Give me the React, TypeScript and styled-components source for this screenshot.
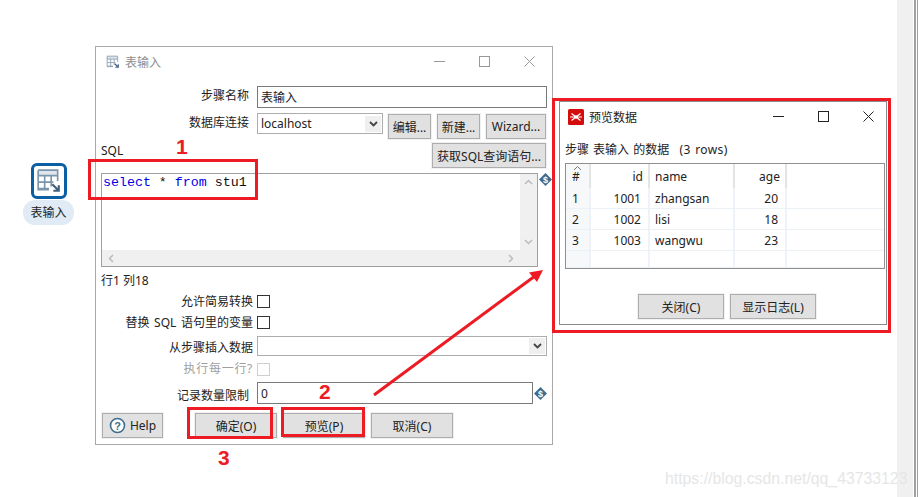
import { createGlobalStyle, styled } from 'styled-components';

const uiFont = `"Noto Sans", "Noto Sans CJK SC", sans-serif`;

const GlobalStyle = createGlobalStyle`
  html, body { margin: 0; padding: 0; background: #fff; }
  body { width: 918px; height: 497px; overflow: hidden; font-family: ${uiFont}; font-size: 12px; color: #222; }
`;

const Canvas = styled.div`
  position: relative;
  width: 918px;
  height: 497px;
  overflow: hidden;
  background: #fff;
`;

const RightEdge = styled.div`
  position: absolute;
  left: 897px;
  top: 0;
  width: 21px;
  height: 497px;
  background: linear-gradient(
    to right,
    #f0f0f0 16px,
    #fff 16px,
    #fff 17px,
    #a0a0a0 17px,
    #a0a0a0 19px,
    #fff 19px,
    #fff 20px,
    #a0a0a0 20px
  );
`;

const StepNode = styled.div`
  position: absolute;
  left: 23px;
  top: 163px;
  width: 51px;
  display: flex;
  flex-direction: column;
  align-items: center;
`;

const StepIcon = styled.div`
  width: 36px;
  height: 36px;
  box-sizing: border-box;
  border: 3px solid #0b5fa5;
  border-radius: 6px;
  display: flex;
  align-items: center;
  justify-content: center;
  background: #fff;
`;

const StepLabel = styled.div`
  margin-top: 1px;
  width: 51px;
  height: 25px;
  line-height: 25px;
  border-radius: 12px;
  background: #e1ebf5;
  text-align: center;
  font-size: 12px;
  color: #222;
`;

const Window = styled.div<{ $x: number; $y: number; $w: number; $h: number; $border: string }>`
  position: absolute;
  left: ${p => p.$x}px;
  top: ${p => p.$y}px;
  width: ${p => p.$w}px;
  height: ${p => p.$h}px;
  box-sizing: border-box;
  background: #fff;
  border: 1px solid ${p => p.$border};
  display: flex;
  flex-direction: column;
`;

const TitleBar = styled.div<{ $muted?: boolean; $pl: number; $pr: number }>`
  height: 29px;
  flex: none;
  display: flex;
  align-items: center;
  padding: 0 ${p => p.$pr}px 0 ${p => p.$pl}px;
  gap: 5px;
  color: ${p => (p.$muted ? '#8d8d8d' : '#222')};
  font-size: 12px;
`;

const TitleText = styled.span`
  flex: 1;
`;

const WinButtons = styled.div`
  display: flex;
  gap: 9px;
`;

const WinButton = styled.div`
  width: 36px;
  display: flex;
  justify-content: center;
  align-items: center;
`;

const Form = styled.div`
  flex: 1;
  display: flex;
  flex-direction: column;
  padding: 10px 5px 0 5px;
`;

const Row = styled.div<{ $h: number; $gap: number; $top?: boolean; $mt?: number }>`
  height: ${p => p.$h}px;
  margin-top: ${p => p.$mt ?? 0}px;
  flex: none;
  display: flex;
  gap: ${p => p.$gap}px;
  align-items: ${p => (p.$top ? 'flex-start' : 'center')};
`;

const Label = styled.div<{ $w: number; $disabled?: boolean; $pt?: number }>`
  width: ${p => p.$w}px;
  flex: none;
  padding-top: ${p => p.$pt ?? 0}px;
  text-align: right;
  font-size: 12px;
  line-height: 18px;
  word-spacing: 1.5px;
  letter-spacing: ${p => (p.$disabled ? 0.7 : 0)}px;
  white-space: nowrap;
  color: ${p => (p.$disabled ? '#a0a0a0' : '#222')};
`;

const TextInput = styled.div<{ $w: number }>`
  width: ${p => p.$w}px;
  height: 22px;
  box-sizing: border-box;
  border: 1px solid #7a7a7a;
  padding-left: 3px;
  line-height: 21px;
  font-size: 12px;
  background: #fff;
`;

const Select = styled.div<{ $w: number; $h: number }>`
  width: ${p => p.$w}px;
  height: ${p => p.$h}px;
  box-sizing: border-box;
  border: 1px solid #adadad;
  padding: 1px 1px 1px 3px;
  display: flex;
  align-items: center;
  justify-content: space-between;
  font-size: 12px;
  color: #222;
`;

const SelectArrow = styled.div`
  width: 16px;
  height: 16px;
  background: #efefef;
  display: flex;
  align-items: center;
  justify-content: center;
`;

const FieldGroup = styled.div`
  display: flex;
  align-items: flex-start;
`;

const Button = styled.div<{ $w: number; $ml?: number; $mt?: number }>`
  width: ${p => p.$w}px;
  height: 25px;
  margin-left: ${p => p.$ml ?? 0}px;
  margin-top: ${p => p.$mt ?? 0}px;
  flex: none;
  box-sizing: border-box;
  background: #e1e1e1;
  border: 1px solid #adadad;
  box-shadow: 0 0 0 1px #f1f1f1;
  display: flex;
  align-items: center;
  justify-content: center;
  gap: 4px;
  font-size: 12px;
  color: #222;
  white-space: nowrap;
`;

const SqlHead = styled.div`
  display: flex;
  justify-content: space-between;
  align-items: flex-start;
  height: 25px;
  flex: none;
  margin-top: 4px;
  padding-right: 1px;
`;

const SqlLabel = styled.div`
  font-size: 12px;
  line-height: 16px;
`;

const SqlRow = styled.div`
  display: flex;
  align-items: flex-start;
  flex: none;
  gap: 1px;
  height: 94px;
  margin-top: 5px;
`;

const SqlBox = styled.div`
  width: 437px;
  height: 94px;
  flex: none;
  box-sizing: border-box;
  border: 1px solid #a0a0a0;
  display: grid;
  grid-template-columns: 1fr 17px;
  grid-template-rows: 1fr 16px;
`;

const SqlText = styled.div`
  font-family: "Liberation Mono", monospace;
  font-size: 13.3px;
  padding: 1px 1px 0;
  line-height: 16px;
  color: #111;
`;

const Keyword = styled.span`
  color: #0000e6;
`;

const ScrollV = styled.div`
  background: #f0f0f0;
  display: flex;
  flex-direction: column;
  justify-content: space-between;
  align-items: center;
  padding: 5px 0;
`;

const ScrollH = styled.div`
  grid-column: 1 / span 2;
  background: #f0f0f0;
  display: flex;
  justify-content: space-between;
  align-items: center;
  padding: 0 23px 0 6px;
`;

const Position = styled.div`
  height: 24px;
  flex: none;
  font-size: 12px;
  line-height: 28px;
`;

const CheckBox = styled.div<{ $disabled?: boolean }>`
  width: 13px;
  height: 13px;
  box-sizing: border-box;
  border: 1px solid ${p => (p.$disabled ? '#cfcfcf' : '#333')};
  background: #fff;
`;

const VarIcon = styled.div<{ $ml?: number }>`
  margin-left: ${p => p.$ml ?? 0}px;
  display: flex;
`;

const InputWithIcon = styled.div`
  display: flex;
  align-items: center;
`;

const Footer = styled.div`
  display: flex;
  align-items: center;
  margin-top: 9px;
  height: 25px;
`;

const PreviewBody = styled.div`
  flex: 1;
  display: flex;
  flex-direction: column;
  padding: 0 0 0 5px;
`;

const RowsCaption = styled.div`
  height: 32px;
  line-height: 38px;
  font-size: 12px;
  word-spacing: 1px;
  flex: none;
`;

const RowsCount = styled.span`
  margin-left: 6px;
  letter-spacing: 0.4px;
`;

const TableFrame = styled.div`
  width: 320px;
  height: 106px;
  box-sizing: border-box;
  border: 1px solid #8f8f8f;
  flex: none;
`;

const Grid = styled.div`
  display: grid;
  grid-template-columns: 25px 59px 85px 52px 1fr;
  grid-template-rows: 24px 21px 21px 21px 1fr;
  height: 100%;
`;

const Cell = styled.div<{ $right?: boolean; $head?: boolean; $index?: boolean; $last?: boolean }>`
  box-sizing: border-box;
  font-size: 12px;
  padding: 0 ${p => (p.$head ? 5 : 7)}px 0 ${p => (p.$index ? 6 : 5)}px;
  display: flex;
  align-items: center;
  position: relative;
  justify-content: ${p => (p.$right ? 'flex-end' : 'flex-start')};
  background: ${p => (p.$index ? '#f7f8f9' : '#fff')};
  border-right: ${p => (p.$last ? 'none' : `2px solid ${p.$head ? '#e4e4e4' : '#eef3fa'}`)};
  border-bottom: ${p => (p.$head ? 'none' : '1px solid #ecf1f6')};
`;

const SortCaret = styled.svg`
  position: absolute;
  left: 7px;
  top: 1px;
`;

const PreviewButtons = styled.div`
  display: flex;
  justify-content: center;
  gap: 6px;
  margin-top: 25px;
  padding-left: 3px;
`;

const RedBox = styled.div<{ $x: number; $y: number; $w: number; $h: number }>`
  position: absolute;
  left: ${p => p.$x}px;
  top: ${p => p.$y}px;
  width: ${p => p.$w}px;
  height: ${p => p.$h}px;
  box-sizing: border-box;
  border: 3px solid #ed1c24;
`;

const Badge = styled.div<{ $x: number; $y: number }>`
  position: absolute;
  left: ${p => p.$x}px;
  top: ${p => p.$y}px;
  color: #ed1c24;
  font-family: "Liberation Sans", sans-serif;
  font-weight: 700;
  font-size: 21px;
  line-height: 24px;
`;

const Arrow = styled.svg`
  position: absolute;
  left: 0;
  top: 0;
`;

const Watermark = styled.div`
  position: absolute;
  left: 665px;
  top: 470px;
  font-family: "Liberation Sans", sans-serif;
  font-size: 15.8px;
  line-height: 18px;
  color: #e6e6e6;
  white-space: nowrap;
`;

const ChevronDown = () => (
  <svg width="11" height="8" viewBox="0 0 11 8">
    <path d="M2 2l3.5 3.5L9 2" fill="none" stroke="#444" strokeWidth="1.8" />
  </svg>
);

const TableIcon = ({ size, color }: { size: number; color: string }) => (
  <svg width={size} height={size} viewBox="0 0 24 24">
    <rect x="2" y="2" width="18" height="5" fill="#dfe5ea" />
    <path d="M2 2h18v10M2 2v18h10" fill="none" stroke={color} strokeWidth="1.5" />
    <path d="M2 7h18M2 13h14M2 19h10M8 7v13M14 7v10" fill="none" stroke={color} strokeWidth="1.5" />
    <path d="M15 15l6 6M21 16v5h-5" fill="none" stroke="#41617f" strokeWidth="2" />
  </svg>
);

const VariableIcon = () => (
  <svg width="13" height="13" viewBox="0 0 13 13">
    <path d="M6.5 0L13 6.5 6.5 13 0 6.5z" fill="#3f6c8c" />
    <text x="6.5" y="9.8" fontSize="9" fontWeight="700" textAnchor="middle" fill="#fff" fontFamily="Liberation Sans">
      $
    </text>
  </svg>
);

const WindowControls = ({ color }: { color: string }) => (
  <WinButtons>
    <WinButton>
      <svg width="11" height="11"><path d="M0 5.500h11" stroke={color} /></svg>
    </WinButton>
    <WinButton>
      <svg width="11" height="11"><rect x=".5" y=".5" width="10" height="10" fill="none" stroke={color} /></svg>
    </WinButton>
    <WinButton>
      <svg width="11" height="11"><path d="M.5.5l10 10M10.500.5l-10 10" stroke={color} /></svg>
    </WinButton>
  </WinButtons>
);

export default function App() {
  return (
    <Canvas>
      <GlobalStyle />
      <RightEdge />

      <StepNode>
        <StepIcon>
          <TableIcon size={26} color="#7b96ac" />
        </StepIcon>
        <StepLabel>表输入</StepLabel>
      </StepNode>

      <Window $x={95} $y={46} $w={458} $h={399} $border="#a9a9a9">
        <TitleBar $muted $pl={10} $pr={5}>
          <TableIcon size={14} color="#8aa0b2" />
          <TitleText>表输入</TitleText>
          <WindowControls color="#999" />
        </TitleBar>
        <Form>
          <Row $h={22} $gap={8} $top>
            <Label $w={148} $pt={1}>步骤名称</Label>
            <TextInput $w={290}>表输入</TextInput>
          </Row>
          <Row $h={26} $gap={8} $top $mt={5}>
            <Label $w={148} $pt={1}>数据库连接</Label>
            <FieldGroup>
              <Select $w={126} $h={21}>
                localhost
                <SelectArrow><ChevronDown /></SelectArrow>
              </Select>
              <Button $w={43} $ml={5} $mt={1}>编辑...</Button>
              <Button $w={43} $ml={6} $mt={1}>新建...</Button>
              <Button $w={60} $ml={6} $mt={1}>Wizard...</Button>
            </FieldGroup>
          </Row>
          <SqlHead>
            <SqlLabel>SQL</SqlLabel>
            <Button $w={114}>获取SQL查询语句...</Button>
          </SqlHead>
          <SqlRow>
            <SqlBox>
              <SqlText>
                <Keyword>select</Keyword> * <Keyword>from</Keyword> stu1
              </SqlText>
              <ScrollV>
                <svg width="9" height="6"><path d="M1 5l3.500-3.500L8 5" fill="none" stroke="#bbb" strokeWidth="1.5" /></svg>
                <svg width="9" height="6"><path d="M1 1l3.500 3.500L8 1" fill="none" stroke="#bbb" strokeWidth="1.5" /></svg>
              </ScrollV>
              <ScrollH>
                <svg width="6" height="9"><path d="M5 1L1.500 4.500 5 8" fill="none" stroke="#bbb" strokeWidth="1.5" /></svg>
                <svg width="6" height="9"><path d="M1 1l3.500 3.500L1 8" fill="none" stroke="#bbb" strokeWidth="1.5" /></svg>
              </ScrollH>
            </SqlBox>
            <VarIcon><VariableIcon /></VarIcon>
          </SqlRow>
          <Position>行1 列18</Position>
          <Row $h={21} $gap={4}>
            <Label $w={152}>允许简易转换</Label>
            <CheckBox />
          </Row>
          <Row $h={21} $gap={4}>
            <Label $w={152}>替换 SQL 语句里的变量</Label>
            <CheckBox />
          </Row>
          <Row $h={26} $gap={4}>
            <Label $w={152} $pt={4}>从步骤插入数据</Label>
            <Select $w={290} $h={20}>
              <span />
              <SelectArrow><ChevronDown /></SelectArrow>
            </Select>
          </Row>
          <Row $h={20} $gap={4}>
            <Label $w={152} $disabled>执行每一行?</Label>
            <CheckBox $disabled />
          </Row>
          <Row $h={22} $gap={8} $mt={3}>
            <Label $w={148} $pt={6}>记录数量限制</Label>
            <InputWithIcon>
              <TextInput $w={276}>0</TextInput>
              <VarIcon $ml={1}><VariableIcon /></VarIcon>
            </InputWithIcon>
          </Row>
          <Footer>
            <Button $w={61} $ml={1}>
              <svg width="17" height="17" viewBox="0 0 17 17">
                <circle cx="8.500" cy="8.500" r="7" fill="#fff" stroke="#3f6c8c" strokeWidth="1.600" />
                <text x="8.500" y="12.500" fontSize="11" fontWeight="700" textAnchor="middle" fill="#3f6c8c" fontFamily="Liberation Sans">?</text>
              </svg>
              Help
            </Button>
            <Button $w={82} $ml={32}>确定(O)</Button>
            <Button $w={82} $ml={6}>预览(P)</Button>
            <Button $w={82} $ml={6}>取消(C)</Button>
          </Footer>
        </Form>
      </Window>

      <Window $x={559} $y={101} $w={328} $h={224} $border="#8a8a8a">
        <TitleBar $pl={8} $pr={0}>
          <svg width="16" height="16" viewBox="0 0 16 16">
            <rect width="16" height="16" rx="1.500" fill="#d40c0c" />
            <path d="M8 8L3.500 4.500M8 8l4.500-3.500M8 8l-4.500 3.500M8 8l4.500 3.500M8 8H2M8 8h6" stroke="#fff" strokeWidth="1.200" />
            <circle cx="8" cy="8" r="1.800" fill="#fff" />
          </svg>
          <TitleText>预览数据</TitleText>
          <WindowControls color="#222" />
        </TitleBar>
        <PreviewBody>
          <RowsCaption>
            步骤 表输入 的数据 <RowsCount>(3 rows)</RowsCount>
          </RowsCaption>
          <TableFrame>
            <Grid>
              <Cell $head $index>
                <SortCaret width="9" height="6"><path d="M1 5l3.500-3.500L8 5" fill="none" stroke="#777" /></SortCaret>
                #
              </Cell>
              <Cell $head $right>id</Cell>
              <Cell $head>name</Cell>
              <Cell $head $right>age</Cell>
              <Cell $head $last />
              <Cell $index>1</Cell>
              <Cell $right>1001</Cell>
              <Cell>zhangsan</Cell>
              <Cell $right>20</Cell>
              <Cell $last />
              <Cell $index>2</Cell>
              <Cell $right>1002</Cell>
              <Cell>lisi</Cell>
              <Cell $right>18</Cell>
              <Cell $last />
              <Cell $index>3</Cell>
              <Cell $right>1003</Cell>
              <Cell>wangwu</Cell>
              <Cell $right>23</Cell>
              <Cell $last />
              <Cell $index />
              <Cell />
              <Cell />
              <Cell />
              <Cell $last />
            </Grid>
          </TableFrame>
          <PreviewButtons>
            <Button $w={86}>关闭(C)</Button>
            <Button $w={86}>显示日志(L)</Button>
          </PreviewButtons>
        </PreviewBody>
      </Window>

      <RedBox $x={88} $y={159} $w={170} $h={41} />
      <RedBox $x={187} $y={407} $w={86} $h={32} />
      <RedBox $x={281} $y={407} $w={84} $h={30} />
      <RedBox $x={552} $y={98} $w={339} $h={235} />
      <Badge $x={176} $y={135}>1</Badge>
      <Badge $x={319} $y={380}>2</Badge>
      <Badge $x={218} $y={446}>3</Badge>
      <Arrow width="918" height="497" viewBox="0 0 918 497">
        <path d="M374 395L535 276" stroke="#ed1c24" strokeWidth="3" fill="none" />
        <path d="M543 270l-14 2.500 8 9.500z" fill="#ed1c24" />
      </Arrow>
      <Watermark>https://blog.csdn.net/qq_43733123</Watermark>
    </Canvas>
  );
}
